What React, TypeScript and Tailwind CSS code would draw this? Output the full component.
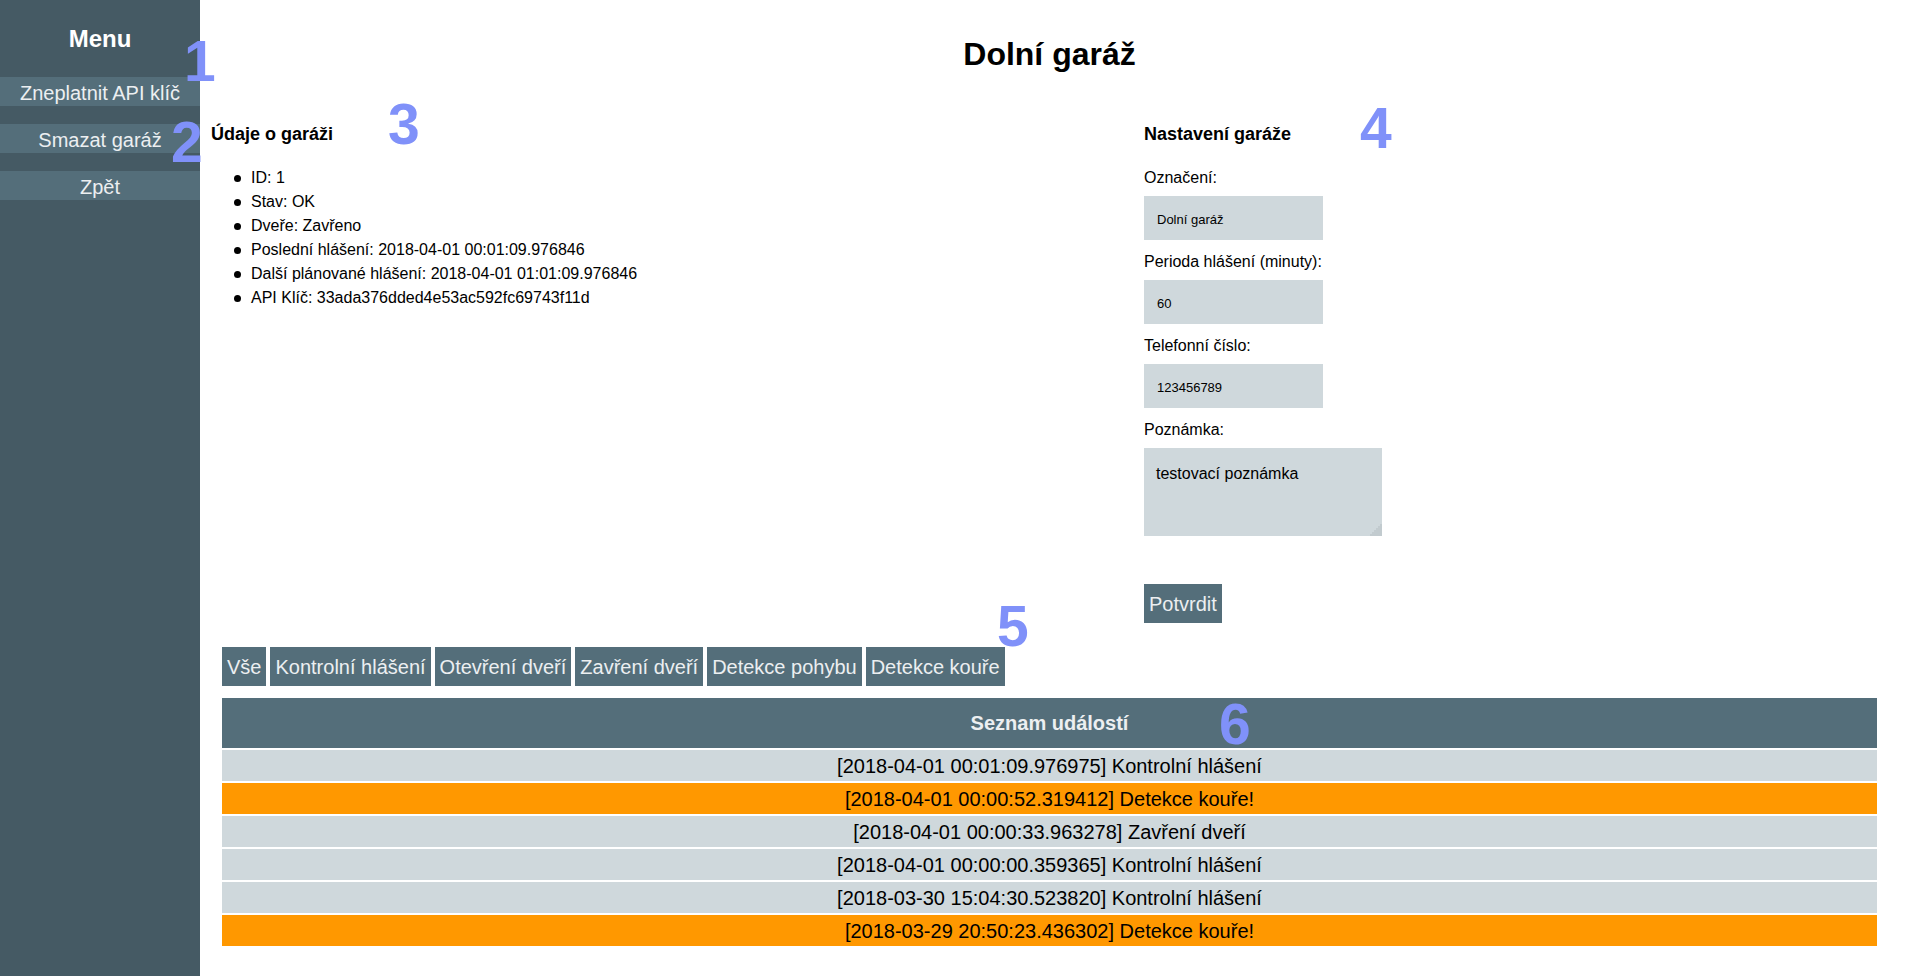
import React from "react";

const menuItems = ["Zneplatnit API klíč", "Smazat garáž", "Zpět"];

const details = [
  "ID: 1",
  "Stav: OK",
  "Dveře: Zavřeno",
  "Poslední hlášení: 2018-04-01 00:01:09.976846",
  "Další plánované hlášení: 2018-04-01 01:01:09.976846",
  "API Klíč: 33ada376dded4e53ac592fc69743f11d",
];

const filters = [
  "Vše",
  "Kontrolní hlášení",
  "Otevření dveří",
  "Zavření dveří",
  "Detekce pohybu",
  "Detekce kouře",
];

const events = [
  { text: "[2018-04-01 00:01:09.976975] Kontrolní hlášení", alarm: false },
  { text: "[2018-04-01 00:00:52.319412] Detekce kouře!", alarm: true },
  { text: "[2018-04-01 00:00:33.963278] Zavření dveří", alarm: false },
  { text: "[2018-04-01 00:00:00.359365] Kontrolní hlášení", alarm: false },
  { text: "[2018-03-30 15:04:30.523820] Kontrolní hlášení", alarm: false },
  { text: "[2018-03-29 20:50:23.436302] Detekce kouře!", alarm: true },
];

// annotation numbers drawn over the screenshot
const marks = [
  { n: "1", cls: "left-[184px] top-[33px]" },
  { n: "2", cls: "left-[171px] top-[114px]" },
  { n: "3", cls: "left-[388px] top-[96px]" },
  { n: "4", cls: "left-[1360px] top-[100px]" },
  { n: "5", cls: "left-[997px] top-[598px]" },
  { n: "6", cls: "left-[1219px] top-[696px]" },
];

function Field({ label, value, first }: { label: string; value: string; first?: boolean }) {
  return (
    <>
      <label className={(first ? "mt-[24px]" : "mt-[13px]") + " block text-[16px] leading-[18px]"}>
        {label}
      </label>
      <input
        defaultValue={value}
        className="mt-[9px] block h-[44px] w-[179px] bg-[#cfd8dc] pl-[13px] pt-[2px] text-[13px] text-black outline-none"
      />
    </>
  );
}

function Grip() {
  const dots: [number, number][] = [];
  for (let y = 0; y < 6; y++) {
    for (let x = 5 - y; x < 6; x++) dots.push([x * 2 + 0.5, y * 2 + 0.5]);
  }
  return (
    <svg className="pointer-events-none absolute bottom-0 right-0" width="12" height="12" viewBox="0 0 12 12">
      {dots.map(([x, y], i) => (
        <rect key={i} x={x} y={y} width="1" height="1" fill="#9aa3a8" />
      ))}
    </svg>
  );
}

export default function App() {
  return (
    <div className="relative flex h-[976px] w-full overflow-hidden bg-white font-['Liberation_Sans',Arial,sans-serif] text-black">
      <aside className="flex w-[200px] shrink-0 flex-col bg-[#455a64] text-[#eceff1]">
        <div className="pt-[25px] text-center text-[24px] font-bold leading-[28px] text-white">Menu</div>
        <nav className="mt-[24px] flex flex-col gap-[18px]">
          {menuItems.map((m) => (
            <a
              key={m}
              href="#"
              className="block h-[29px] bg-[#546e7a] pt-[5px] text-center text-[20px] leading-[23px]"
            >
              {m}
            </a>
          ))}
        </nav>
      </aside>

      <main className="flex-1 pl-[11px] pr-[39px]">
        <h1 className="ml-[11px] pt-[36px] text-center text-[32px] font-bold leading-[37px]">Dolní garáž</h1>

        <div className="mt-[51px] flex">
          <section className="w-[933px] shrink-0">
            <h3 className="text-[18px] font-bold leading-[21px]">Údaje o garáži</h3>
            <ul className="mt-[21px] pl-[23px] text-[16px] leading-[24px]">
              {details.map((d) => (
                <li key={d} className="flex items-center">
                  <span className="mr-[10px] h-[7px] w-[7px] shrink-0 rounded-full bg-black" />
                  {d}
                </li>
              ))}
            </ul>
          </section>

          <section className="flex flex-col items-start">
            <h3 className="text-[18px] font-bold leading-[21px]">Nastavení garáže</h3>
            <Field label="Označení:" value="Dolní garáž" first />
            <Field label="Perioda hlášení (minuty):" value="60" />
            <Field label="Telefonní číslo:" value="123456789" />
            <label className="mt-[13px] block text-[16px] leading-[18px]">Poznámka:</label>
            <div className="relative mt-[9px]">
              <textarea
                defaultValue="testovací poznámka"
                className="block h-[88px] w-[238px] resize-none bg-[#cfd8dc] px-[12px] pt-[17px] text-[16px] leading-[18px] text-black outline-none"
              />
              <Grip />
            </div>
            <button className="mt-[48px] h-[39px] bg-[#546e7a] px-[5px] pt-[2px] text-[20px] leading-[23px] text-[#eceff1]">
              Potvrdit
            </button>
          </section>
        </div>

        <div className="ml-[11px] mt-[24px]">
          <div className="flex gap-[4px]">
            {filters.map((f) => (
              <button
                key={f}
                className="h-[39px] bg-[#546e7a] px-[5px] pt-[2px] text-[20px] leading-[23px] text-[#eceff1]"
              >
                {f}
              </button>
            ))}
          </div>

          <div className="mt-[12px] flex flex-col gap-[2px]">
            <div className="flex h-[50px] items-center justify-center bg-[#546e7a] text-[20px] font-bold text-[#eceff1]">
              Seznam událostí
            </div>
            {events.map((e) => (
              <div
                key={e.text}
                className={
                  (e.alarm ? "bg-[#ff9800]" : "bg-[#cfd8dc]") +
                  " h-[31px] pt-[5px] text-center text-[20px] leading-[23px]"
                }
              >
                {e.text}
              </div>
            ))}
          </div>
        </div>
      </main>

      {marks.map((m) => (
        <span
          key={m.n}
          className={"pointer-events-none absolute z-10 text-[57px] font-bold leading-[57px] text-[#8091f9] " + m.cls}
        >
          {m.n}
        </span>
      ))}
    </div>
  );
}
